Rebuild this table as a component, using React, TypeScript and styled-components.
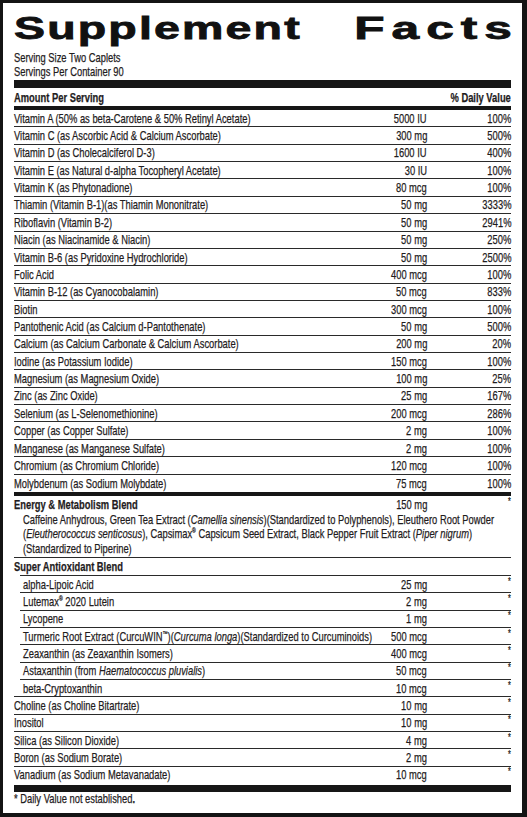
import React from "react";
import styled, { createGlobalStyle } from "styled-components";

const SQUEEZE = 0.72;

const Global = createGlobalStyle`
  html, body { margin: 0; padding: 0; background: #ffffff; }
  body { font-family: "Liberation Sans", Arial, sans-serif; color: #231f20; }
`;

const Panel = styled.div`
  box-sizing: border-box;
  width: 527px;
  height: 817px;
  border-style: solid;
  border-color: #141414;
  border-width: 3px 5px 4px 3px;
  padding: 10px 11px 0 11px;
  background: #fff;
  overflow: hidden;
  font-family: "Liberation Sans", Arial, sans-serif;
  font-size: 13px;
  color: #1f1c1d;
  -webkit-text-stroke: 0.25px #1f1c1d;
`;

const Title = styled.h1`
  margin: 0;
  display: flex;
  justify-content: space-between;
  white-space: nowrap;
  font-family: "Liberation Sans", Arial, sans-serif;
  font-weight: 700;
  font-size: 31px;
  line-height: 32px;
  color: #111;
`;

const TitleWord = styled.span<{ $right?: boolean; $scale: number; $ls: number }>`
  display: inline-block;
  letter-spacing: ${(p) => p.$ls}px;
  -webkit-text-stroke: 0.8px #111;
  transform: scaleX(${(p) => p.$scale});
  transform-origin: ${(p) => (p.$right ? "right" : "left")} center;
  margin-right: ${(p) => (p.$right ? -(p.$ls * p.$scale + 1) : 0)}px;
`;

const Cond = styled.span<{ $right?: boolean; $bold?: boolean }>`
  display: inline-block;
  white-space: nowrap;
  font-weight: ${(p) => (p.$bold ? 700 : 400)};
  transform: scaleX(${SQUEEZE});
  transform-origin: ${(p) => (p.$right ? "right" : "left")} center;
`;

const InfoBlock = styled.div`
  margin-top: 6px;
  display: flex;
  flex-direction: column;
  align-items: flex-start;
  line-height: 14px;
`;

const Bar = styled.div<{ $h: number; $mt?: number }>`
  height: ${(p) => p.$h}px;
  margin-top: ${(p) => p.$mt ?? 0}px;
  background: #161616;
`;

const HeadRow = styled.div`
  display: flex;
  justify-content: space-between;
  align-items: center;
  height: 18px;
`;

const Row = styled.div<{ $indent?: boolean; $border?: "top" | "bottom" | "none"; $h?: number }>`
  box-sizing: border-box;
  display: grid;
  grid-template-columns: minmax(0, 1fr) 80px 84px;
  align-items: center;
  height: ${(p) => p.$h ?? 17.36}px;
  margin-left: ${(p) => (p.$indent ? 6 : 0)}px;
  padding-left: ${(p) => (p.$indent ? 2.7 : 0)}px;
  border-top: ${(p) => (p.$border === "top" ? "1px solid #2a2a2a" : "0")};
  border-bottom: ${(p) => (p.$border === "bottom" ? "1px solid #2a2a2a" : "0")};
  white-space: nowrap;
`;

const Name = styled.span<{ $bold?: boolean }>`
  justify-self: start;
  white-space: nowrap;
  font-weight: ${(p) => (p.$bold ? 700 : 400)};
  transform: scaleX(${SQUEEZE});
  transform-origin: left center;
`;

const Amt = styled.span`
  justify-self: end;
  white-space: nowrap;
  transform: scaleX(${SQUEEZE});
  transform-origin: right center;
`;

const DV = styled.span<{ $star?: boolean }>`
  justify-self: end;
  white-space: nowrap;
  transform: scaleX(${SQUEEZE}) ${(p) => (p.$star ? "translateY(-3px)" : "")};
  transform-origin: right center;
  font-size: ${(p) => (p.$star ? 10 : 13)}px;
`;

const IngredientBox = styled.div`
  padding: 0 0 1px 9px;
  border-bottom: 1px solid #2a2a2a;
`;

const IngredientText = styled.p`
  margin: 0;
  line-height: 14.5px;
  white-space: nowrap;
  transform: scaleX(${SQUEEZE});
  transform-origin: left center;
`;

const Sup = styled.sup`
  font-size: 7px;
  vertical-align: 5px;
  line-height: 0;
`;

const Foot = styled.div`
  line-height: 14px;
  b { font-weight: 700; }
`;

type Item = [React.ReactNode, string, string];

const vitamins: Item[] = [
  ["Vitamin A (50% as beta-Carotene & 50% Retinyl Acetate)", "5000 IU", "100%"],
  ["Vitamin C (as Ascorbic Acid & Calcium Ascorbate)", "300 mg", "500%"],
  ["Vitamin D (as Cholecalciferol D-3)", "1600 IU", "400%"],
  ["Vitamin E (as Natural d-alpha Tocopheryl Acetate)", "30 IU", "100%"],
  ["Vitamin K (as Phytonadione)", "80 mcg", "100%"],
  ["Thiamin (Vitamin B-1)(as Thiamin Mononitrate)", "50 mg", "3333%"],
  ["Riboflavin (Vitamin B-2)", "50 mg", "2941%"],
  ["Niacin (as Niacinamide & Niacin)", "50 mg", "250%"],
  ["Vitamin B-6 (as Pyridoxine Hydrochloride)", "50 mg", "2500%"],
  ["Folic Acid", "400 mcg", "100%"],
  ["Vitamin B-12 (as Cyanocobalamin)", "50 mcg", "833%"],
  ["Biotin", "300 mcg", "100%"],
  ["Pantothenic Acid (as Calcium d-Pantothenate)", "50 mg", "500%"],
  ["Calcium (as Calcium Carbonate & Calcium Ascorbate)", "200 mg", "20%"],
  ["Iodine (as Potassium Iodide)", "150 mcg", "100%"],
  ["Magnesium (as Magnesium Oxide)", "100 mg", "25%"],
  ["Zinc (as Zinc Oxide)", "25 mg", "167%"],
  ["Selenium (as L-Selenomethionine)", "200 mcg", "286%"],
  ["Copper (as Copper Sulfate)", "2 mg", "100%"],
  ["Manganese (as Manganese Sulfate)", "2 mg", "100%"],
  ["Chromium (as Chromium Chloride)", "120 mcg", "100%"],
  ["Molybdenum (as Sodium Molybdate)", "75 mcg", "100%"],
];

const antioxidants: Item[] = [
  ["alpha-Lipoic Acid", "25 mg", "*"],
  [<>Lutemax<Sup>®</Sup> 2020 Lutein</>, "2 mg", "*"],
  ["Lycopene", "1 mg", "*"],
  [
    <>
      Turmeric Root Extract (CurcuWIN<Sup>™</Sup>)(<i>Curcuma longa</i>)(Standardized to Curcuminoids)
    </>,
    "500 mcg",
    "*",
  ],
  ["Zeaxanthin (as Zeaxanthin Isomers)", "400 mcg", "*"],
  [<>Astaxanthin (from <i>Haematococcus pluvialis</i>)</>, "50 mcg", "*"],
  ["beta-Cryptoxanthin", "10 mcg", "*"],
];

const others: Item[] = [
  ["Choline (as Choline Bitartrate)", "10 mg", "*"],
  ["Inositol", "10 mg", "*"],
  ["Silica (as Silicon Dioxide)", "4 mg", "*"],
  ["Boron (as Sodium Borate)", "2 mg", "*"],
  ["Vanadium (as Sodium Metavanadate)", "10 mcg", "*"],
];

export default function App() {
  return (
    <>
      <Global />
      <Panel>
        <Title>
          <TitleWord $scale={1.5} $ls={1.45}>Supplement</TitleWord>
          <TitleWord $right $scale={1.6} $ls={4.4}>Facts</TitleWord>
        </Title>
        <InfoBlock>
          <Cond>Serving Size Two Caplets</Cond>
          <Cond>Servings Per Container 90</Cond>
        </InfoBlock>
        <Bar $h={8} $mt={1} />
        <HeadRow>
          <Cond $bold>Amount Per Serving</Cond>
          <Cond $bold $right>% Daily Value</Cond>
        </HeadRow>
        <Bar $h={4} />
        {vitamins.map(([n, a, d], i) => (
          <Row key={i} $border={i < vitamins.length - 1 ? "bottom" : "none"}>
            <Name>{n}</Name>
            <Amt>{a}</Amt>
            <DV>{d}</DV>
          </Row>
        ))}
        <Bar $h={4} />
        <Row $h={17}>
          <Name $bold>Energy &amp; Metabolism Blend</Name>
          <Amt>150 mg</Amt>
          <DV $star>*</DV>
        </Row>
        <IngredientBox>
          <IngredientText>
            Caffeine Anhydrous, Green Tea Extract (<i>Camellia sinensis</i>)(Standardized to Polyphenols), Eleuthero Root Powder
            <br />
            (<i>Eleutherococcus senticosus</i>), Capsimax<Sup>®</Sup> Capsicum Seed Extract, Black Pepper Fruit Extract (<i>Piper nigrum</i>)
            <br />
            (Standardized to Piperine)
          </IngredientText>
        </IngredientBox>
        <Row $h={16.5}>
          <Name $bold>Super Antioxidant Blend</Name>
        </Row>
        {antioxidants.map(([n, a, d], i) => (
          <Row key={i} $indent $border="top" $h={17.33}>
            <Name>{n}</Name>
            <Amt>{a}</Amt>
            <DV $star>{d}</DV>
          </Row>
        ))}
        {others.map(([n, a, d], i) => (
          <Row key={i} $border="top" $h={17.33}>
            <Name>{n}</Name>
            <Amt>{a}</Amt>
            <DV $star>{d}</DV>
          </Row>
        ))}
        <Bar $h={7} $mt={2} />
        <Foot>
          <Cond>
            * Daily Value not established<b>.</b>
          </Cond>
        </Foot>
      </Panel>
    </>
  );
}
